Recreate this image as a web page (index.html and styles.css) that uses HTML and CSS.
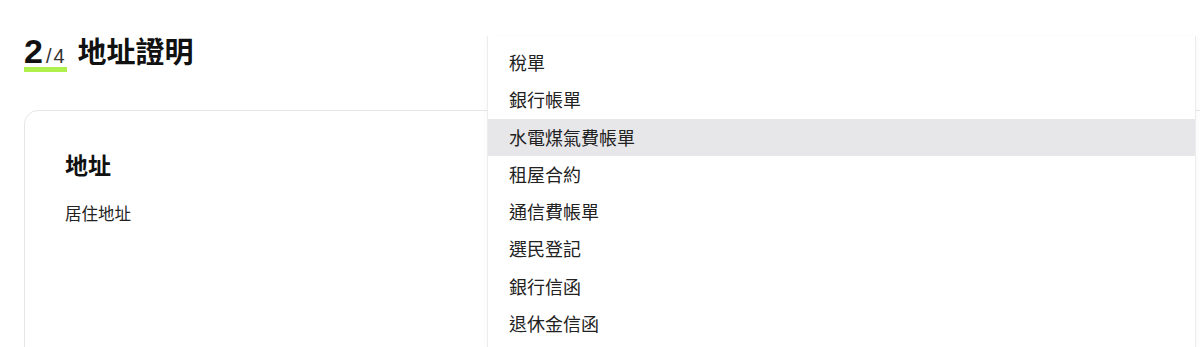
FILE: index.html
```html
<!DOCTYPE html>
<html lang="zh-Hant">
<head>
<meta charset="utf-8">
<link rel="stylesheet" href="styles.css">
</head>
<body>
<div class="page">
  <h1 class="step-title">
    <span class="step"><span class="step-num">2</span><span class="step-total">/4</span></span>
    <span class="title-text">地址證明</span>
  </h1>
  <div class="card">
    <h2 class="card-title">地址</h2>
    <div class="field-label">居住地址</div>
  </div>
  <ul class="menu">
    <li class="menu-item">稅單</li>
    <li class="menu-item">銀行帳單</li>
    <li class="menu-item active">水電煤氣費帳單</li>
    <li class="menu-item">租屋合約</li>
    <li class="menu-item">通信費帳單</li>
    <li class="menu-item">選民登記</li>
    <li class="menu-item">銀行信函</li>
    <li class="menu-item">退休金信函</li>
  </ul>
</div>
</body>
</html>
```

FILE: styles.css
```css
html, body {
  margin: 0;
  padding: 0;
  background: #ffffff;
  overflow: hidden;
}
body {
  width: 1200px;
  height: 347px;
  font-family: "Liberation Sans", Arial, "Noto Sans CJK TC", sans-serif;
  color: #111;
}
.page {
  position: relative;
  width: 1260px;
  height: 347px;
  overflow: hidden;
  padding: 29px 0 0 24px;
  box-sizing: border-box;
}
.step-title {
  margin: 0;
  display: flex;
  align-items: baseline;
  gap: 11px;
  height: 48px;
  font-weight: 700;
}
.step {
  display: inline-flex;
  align-items: baseline;
  background-image: linear-gradient(#b0f04c, #b0f04c);
  background-repeat: no-repeat;
  background-size: 46px 5px;
  background-position: 0 calc(100% - 2px);
  line-height: 36px;
}
.step-num {
  font-size: 34px;
  font-weight: 700;
  font-family: "Liberation Sans", Arial, sans-serif;
  color: #111;
}
.step-total {
  font-size: 20px;
  font-weight: 400;
  margin-left: 3px;
  color: #333;
  letter-spacing: 2px;
}
.title-text {
  font-size: 29px;
  font-weight: 700;
  font-family: "Noto Sans CJK TC", sans-serif;
  color: #111;
}
.card {
  margin-top: 33px;
  border: 1px solid #e6e6e6;
  border-radius: 14px;
  padding: 38px 40px 80px;
  height: 300px;
}
.card-title {
  margin: 0;
  font-size: 23px;
  font-weight: 700;
  font-family: "Noto Sans CJK TC", sans-serif;
  line-height: 30px;
  color: #111;
}
.field-label {
  margin-top: 23px;
  font-size: 16.5px;
  font-family: "Noto Sans CJK TC", sans-serif;
  color: #222;
  line-height: 22px;
}
.menu {
  position: absolute;
  left: 487px;
  top: 36px;
  width: 709px;
  margin: 0;
  padding: 8px 0 0;
  list-style: none;
  background: #fff;
  border-left: 1px solid #ececec;
  border-right: 1px solid #ececec;
  box-shadow: 0 2px 6px rgba(0,0,0,0.04);
  height: 311px;
  box-sizing: border-box;
}
.menu-item {
  height: 37.3px;
  line-height: 37.3px;
  padding-left: 21px;
  font-size: 18px;
  font-family: "Noto Sans CJK TC", sans-serif;
  color: #222;
}
.menu-item.active {
  background: #e7e7ea;
}
```
